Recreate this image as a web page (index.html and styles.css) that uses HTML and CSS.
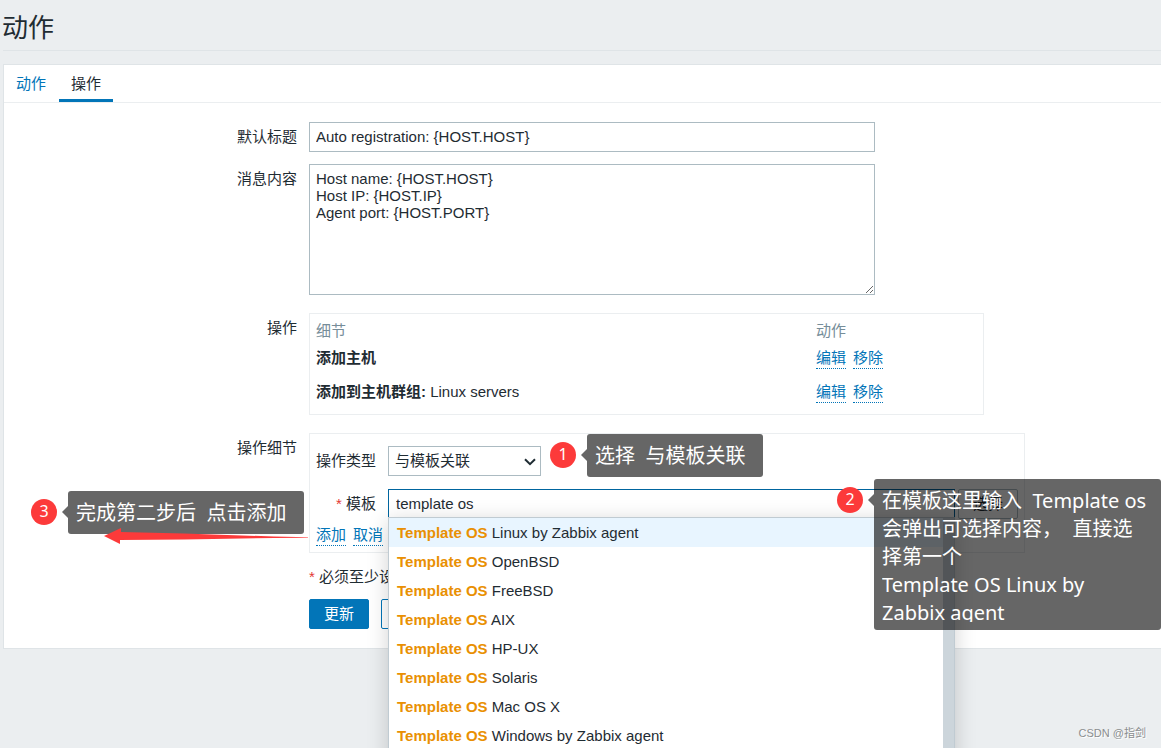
FILE: index.html
```html
<!DOCTYPE html>
<html lang="zh-CN">
<head>
<meta charset="utf-8">
<title>动作</title>
<link rel="stylesheet" href="styles.css">
</head>
<body>
<header class="page-header"><h1>动作</h1></header>

<main class="panel">
  <nav class="tabs">
    <a class="tab" href="#action">动作</a>
    <a class="tab tab-active" href="#operations">操作</a>
  </nav>

  <form class="form">
    <label class="label" for="subject">默认标题</label>
    <div class="field"><input class="control wide" id="subject" type="text" value="Auto registration: {HOST.HOST}"></div>

    <label class="label" for="message">消息内容</label>
    <div class="field"><textarea class="control wide message" id="message">Host name: {HOST.HOST}
Host IP: {HOST.IP}
Agent port: {HOST.PORT}</textarea></div>

    <span class="label label-box">操作</span>
    <div class="field box operations">
      <table class="table">
        <thead><tr><th class="col-detail">细节</th><th>动作</th></tr></thead>
        <tbody>
          <tr><td><b>添加主机</b></td><td><a class="link" href="#edit1">编辑</a><a class="link" href="#remove1">移除</a></td></tr>
          <tr><td><b>添加到主机群组:</b> Linux servers</td><td><a class="link" href="#edit2">编辑</a><a class="link" href="#remove2">移除</a></td></tr>
        </tbody>
      </table>
    </div>

    <span class="label label-box">操作细节</span>
    <div class="field box details">
      <div class="row">
        <label class="row-label" for="optype">操作类型</label>
        <div class="select-wrap">
          <select class="control select" id="optype"><option>与模板关联</option></select>
          <svg class="chevron" viewBox="0 0 12 8" aria-hidden="true"><path d="M1 1.200 6 6.200 11 1.200" fill="none" stroke="#1f2c33" stroke-width="2"/></svg>
        </div>
      </div>
      <div class="row">
        <label class="row-label" for="template"><span class="star">*</span> 模板</label>
        <div class="template-wrap">
          <input class="control template" id="template" type="text" value="template os">
          <ul class="suggest" role="listbox" aria-label="模板">
            <li class="option option-on" role="option"><b>Template OS</b> Linux by Zabbix agent</li>
            <li class="option" role="option"><b>Template OS</b> OpenBSD</li>
            <li class="option" role="option"><b>Template OS</b> FreeBSD</li>
            <li class="option" role="option"><b>Template OS</b> AIX</li>
            <li class="option" role="option"><b>Template OS</b> HP-UX</li>
            <li class="option" role="option"><b>Template OS</b> Solaris</li>
            <li class="option" role="option"><b>Template OS</b> Mac OS X</li>
            <li class="option" role="option"><b>Template OS</b> Windows by Zabbix agent</li>
          </ul>
        </div>
        <button class="btn-pick" type="button">选择</button>
      </div>
      <div class="links"><a class="link" href="#add">添加</a><a class="link" href="#cancel">取消</a></div>
    </div>

    <p class="hint"><span class="star">*</span> 必须至少设置</p>
    <div class="actions">
      <button class="btn btn-main" type="button">更新</button>
      <button class="btn" type="button">克隆</button>
    </div>
  </form>
</main>

<aside class="note note-1"><span class="num">1</span><div class="bubble">选择  与模板关联</div></aside>
<aside class="note note-2"><span class="num">2</span><div class="bubble bubble-long"><div class="clip">在模板这里输入  Template os
会弹出可选择内容，  直接选
择第一个
Template OS Linux by
Zabbix agent</div></div></aside>
<aside class="note note-3"><span class="num">3</span><div class="bubble">完成第二步后  点击添加</div></aside>
<svg class="arrow" viewBox="0 0 204 16" aria-hidden="true"><path d="M0 8 17 0V4L80 5.500 170 8.500 204 9.300V9.700L170 10 80 11.500 16 12V16Z" fill="#fc3a3a"/></svg>
<footer class="credit">CSDN @指剑</footer>
</body>
</html>
```
FILE: styles.css
```css
* { box-sizing: border-box; }
html { height: 100%; overflow: hidden; }
body {
  position: relative;
  height: 100%;
  margin: 0;
  overflow: hidden;
  background: #ebeef0;
  color: #1f2c33;
  font: 15px/20px "Liberation Sans", "Noto Sans CJK SC", sans-serif;
}
.page-header {
  height: 51px;
  margin-left: 3px;
  padding-top: 9px;
  border-bottom: 1px solid #dfe4e7;
}
h1 { margin: 0 0 0 -1px; font-size: 26px; line-height: 38px; font-weight: 400; }

.panel {
  margin: 13px 0 0 3px;
  padding-bottom: 19px;
  background: #fff;
  border: 1px solid #dfe4e7;
  border-right: 0;
}
.tabs { display: flex; gap: 1px; border-bottom: 1px solid #ebeef0; }
.tab {
  padding: 9px 12px 5px;
  border-bottom: 3px solid transparent;
  color: #0275b8;
  text-decoration: none;
}
.tab-active { border-color: #0275b8; color: #1f2c33; }

.form {
  display: grid;
  grid-template-columns: minmax(0, 293px) minmax(0, 1fr);
  column-gap: 12px;
  padding-top: 19px;
}
.label { padding-top: 5px; text-align: right; }
.field { margin-bottom: 12px; }
.control {
  display: block;
  height: 30px;
  margin: 0;
  padding: 0 6px;
  border: 1px solid #acbbc2;
  border-radius: 0;
  background: #fff;
  color: #1f2c33;
  font: inherit;
  outline: 0;
}
input.control { padding-bottom: 2px; }
.wide { width: 100%; max-width: 566px; }
.message { height: 131px; padding-top: 5px; line-height: 17px; }

.box { margin: 6px 0 12px; border: 1px solid #ebeef0; }
.label-box { padding-top: 11px; }
.operations { max-width: 675px; padding: 7px 6px 5px; }
.table { width: 100%; border-collapse: collapse; table-layout: fixed; }
.table th { padding: 0 0 7px; color: #768d99; font-weight: 400; text-align: left; }
.table td { height: 34px; padding: 0; vertical-align: top; }
.table tr:last-child td { height: 27px; }
.col-detail { width: 500px; }
.link {
  display: inline-block;
  margin-right: 7px;
  border-bottom: 1px dotted #0275b8;
  color: #0275b8;
  text-decoration: none;
}
.details { max-width: 716px; padding: 12px 6px 6px; }
.row { display: flex; margin-bottom: 13px; }
.row-label { width: 60px; margin-right: 12px; padding-top: 5px; text-align: right; white-space: nowrap; }
.star { color: #e33734; }
.select-wrap { position: relative; width: 153px; }
.select { width: 100%; appearance: none; }
.chevron { position: absolute; top: 12px; right: 5px; width: 12px; height: 8px; }
.template-wrap { position: relative; width: 567px; }
.template { width: 100%; padding: 0 7px; border-color: #00659f; }
.suggest {
  position: absolute;
  z-index: 1;
  top: 28px;
  left: 0;
  width: 567px;
  height: 300px;
  margin: 0;
  padding: 0;
  list-style: none;
  background: linear-gradient(#ccd5db, #ccd5db) right / 11px 100% no-repeat #fff;
  border: 1px solid #c0cbd2;
  box-shadow: 0 4px 20px rgba(0, 0, 0, 0.18);
}
.option { margin-right: 11px; padding: 5px 8px 4px; }
.option-on { background: #e8f5ff; }
.option b { color: #e99003; }
.btn-pick {
  width: 60px;
  height: 30px;
  margin-left: 3px;
  padding: 0;
  border: 1px solid #acbbc2;
  border-radius: 2px;
  background: #fff;
  color: #1f2c33;
  font: inherit;
}
.links { margin-top: -7px; }
.hint, .actions { grid-column: 2; }
.hint { margin: 2px 0 12px; }
.actions { display: flex; gap: 12px; }
.btn {
  height: 30px;
  padding: 0 14px;
  border: 1px solid #0275b8;
  border-radius: 2px;
  background: #fff;
  color: #0275b8;
  font: inherit;
}
.btn-main { background: #0275b8; color: #fff; }

/* Numbered notes that float over the form */
.note {
  position: absolute;
  z-index: 2;
  display: flex;
  gap: 11px;
  color: #fff;
  font: 20px/28px "Noto Sans", "Noto Sans CJK SC", sans-serif;
}
.note-1 { top: 434px; left: 550px; }
.note-2 { top: 479px; left: 837px; }
.note-3 { top: 491px; left: 31px; }
.num {
  width: 26px;
  height: 26px;
  margin-top: 8px;
  border-radius: 50%;
  background: #fc3a3a;
  font-size: 16px;
  line-height: 25px;
  text-align: center;
}
.bubble {
  position: relative;
  padding: 8px 18px 7px 8px;
  border-radius: 3px;
  background: rgba(0, 0, 0, 0.6);
  white-space: pre;
}
.bubble::before {
  content: "";
  position: absolute;
  top: 15px;
  right: 100%;
  border: 6px solid transparent;
  border-left: 0;
  border-right-color: rgba(0, 0, 0, 0.6);
}
.bubble-long { width: 287px; padding: 8px; }
.clip { height: 135px; overflow: hidden; }
.arrow { position: absolute; z-index: 3; top: 528px; left: 104px; width: 204px; height: 16px; }
.credit {
  position: absolute;
  right: 15px;
  bottom: 5px;
  color: #8a8d8f;
  font-size: 11px;
  text-shadow: 1px 1px 0 #fff;
}
```
